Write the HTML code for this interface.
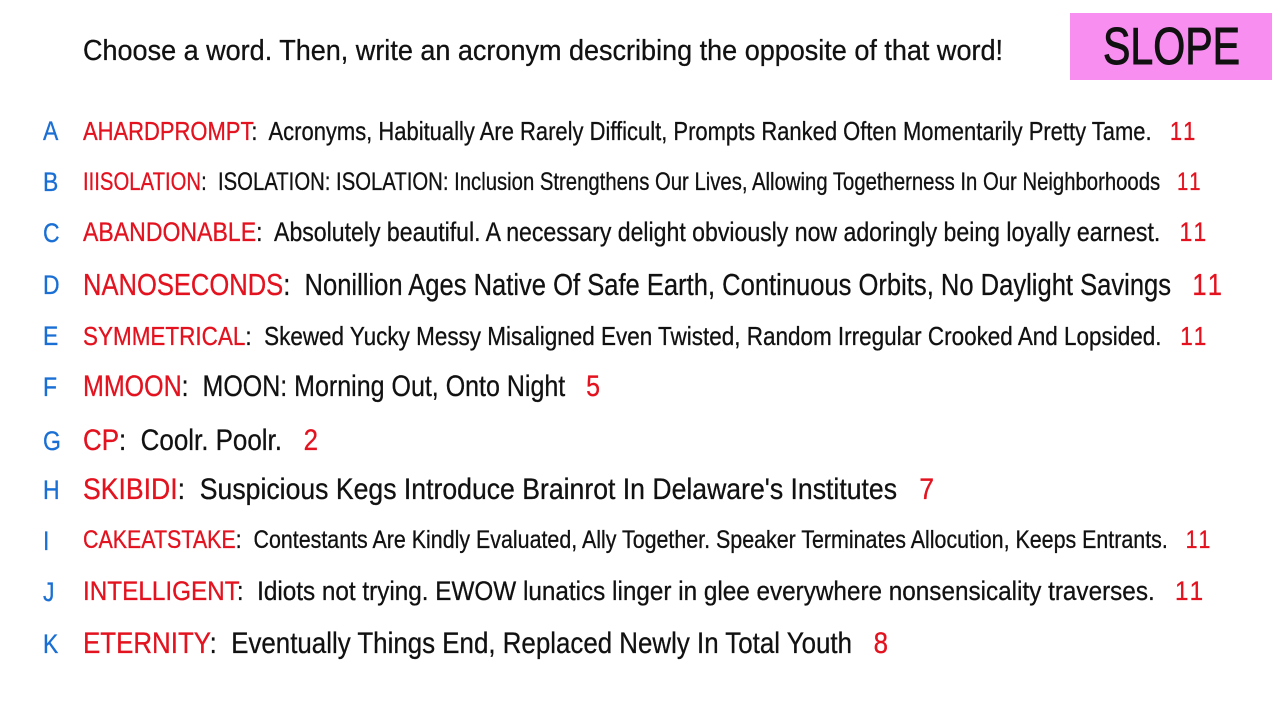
<!DOCTYPE html>
<html><head><meta charset="utf-8"><style>
html,body{margin:0;padding:0;background:#fff;width:1280px;height:720px;overflow:hidden;position:relative;font-family:"Liberation Sans Narrow","Liberation Sans",sans-serif;}
.l{position:absolute;left:83px;white-space:pre;line-height:1;transform-origin:0 50%;color:#111;-webkit-text-stroke:0.3px #111;}
.k{position:absolute;left:43px;color:#1a6fd4;line-height:1;transform:scaleX(0.85);transform-origin:0 50%;-webkit-text-stroke:0.3px #1a6fd4;}
.r{color:#e3121f;-webkit-text-stroke:0.3px #e3121f}
.n{letter-spacing:0.12em}
#box{position:absolute;left:1070px;top:13px;width:202px;height:67px;background:#f88ff0;}
#slope{position:absolute;left:1103px;top:21px;font-size:52px;line-height:1;color:#111;white-space:pre;transform-origin:0 50%;-webkit-text-stroke:1px #111;}
</style></head><body>
<div id="box"></div>
<div id="slope" data-w="137">SLOPE</div>
<div class="l" data-w="920" style="top:37px;font-size:29px">Choose a word. Then, write an acronym describing the opposite of that word!</div>

<div class="k" style="top:118px;font-size:27px">A</div>
<div class="l" data-w="1115" style="top:118px;font-size:26px"><span class="r">AHARDPROMPT</span>:  Acronyms, Habitually Are Rarely Difficult, Prompts Ranked Often Momentarily Pretty Tame.   <span class="r n">11</span></div>
<div class="k" style="top:169px;font-size:27px">B</div>
<div class="l" data-w="1120" style="top:170px;font-size:25px"><span class="r">IIISOLATION</span>:  ISOLATION: ISOLATION: Inclusion Strengthens Our Lives, Allowing Togetherness In Our Neighborhoods   <span class="r n">11</span></div>
<div class="k" style="top:220px;font-size:27px">C</div>
<div class="l" data-w="1126" style="top:219px;font-size:27px"><span class="r">ABANDONABLE</span>:  Absolutely beautiful. A necessary delight obviously now adoringly being loyally earnest.   <span class="r n">11</span></div>
<div class="k" style="top:272px;font-size:27px">D</div>
<div class="l" data-w="1142" style="top:269px;font-size:31px"><span class="r">NANOSECONDS</span>:  Nonillion Ages Native Of Safe Earth, Continuous Orbits, No Daylight Savings   <span class="r n">11</span></div>
<div class="k" style="top:323px;font-size:27px">E</div>
<div class="l" data-w="1126" style="top:323px;font-size:26px"><span class="r">SYMMETRICAL</span>:  Skewed Yucky Messy Misaligned Even Twisted, Random Irregular Crooked And Lopsided.   <span class="r n">11</span></div>
<div class="k" style="top:374px;font-size:27px">F</div>
<div class="l" data-w="517" style="top:372px;font-size:30px"><span class="r">MMOON</span>:  MOON: Morning Out, Onto Night   <span class="r">5</span></div>
<div class="k" style="top:428px;font-size:27px">G</div>
<div class="l" data-w="235" style="top:426px;font-size:30px"><span class="r">CP</span>:  Coolr. Poolr.   <span class="r">2</span></div>
<div class="k" style="top:477px;font-size:27px">H</div>
<div class="l" data-w="851" style="top:475px;font-size:30px"><span class="r">SKIBIDI</span>:  Suspicious Kegs Introduce Brainrot In Delaware's Institutes   <span class="r">7</span></div>
<div class="k" style="top:528px;font-size:27px">I</div>
<div class="l" data-w="1130" style="top:528px;font-size:25px"><span class="r">CAKEATSTAKE</span>:  Contestants Are Kindly Evaluated, Ally Together. Speaker Terminates Allocution, Keeps Entrants.   <span class="r n">11</span></div>
<div class="k" style="top:579px;font-size:27px">J</div>
<div class="l" data-w="1123" style="top:578px;font-size:27px"><span class="r">INTELLIGENT</span>:  Idiots not trying. EWOW lunatics linger in glee everywhere nonsensicality traverses.   <span class="r n">11</span></div>
<div class="k" style="top:631px;font-size:27px">K</div>
<div class="l" data-w="805" style="top:629px;font-size:30px"><span class="r">ETERNITY</span>:  Eventually Things End, Replaced Newly In Total Youth   <span class="r">8</span></div>
<script>
document.querySelectorAll('[data-w]').forEach(function(e){
  var w=e.getBoundingClientRect().width;var t=+e.getAttribute('data-w');
  e.style.transform='scaleX('+(t/w)+')';
});
</script>
</body></html>
